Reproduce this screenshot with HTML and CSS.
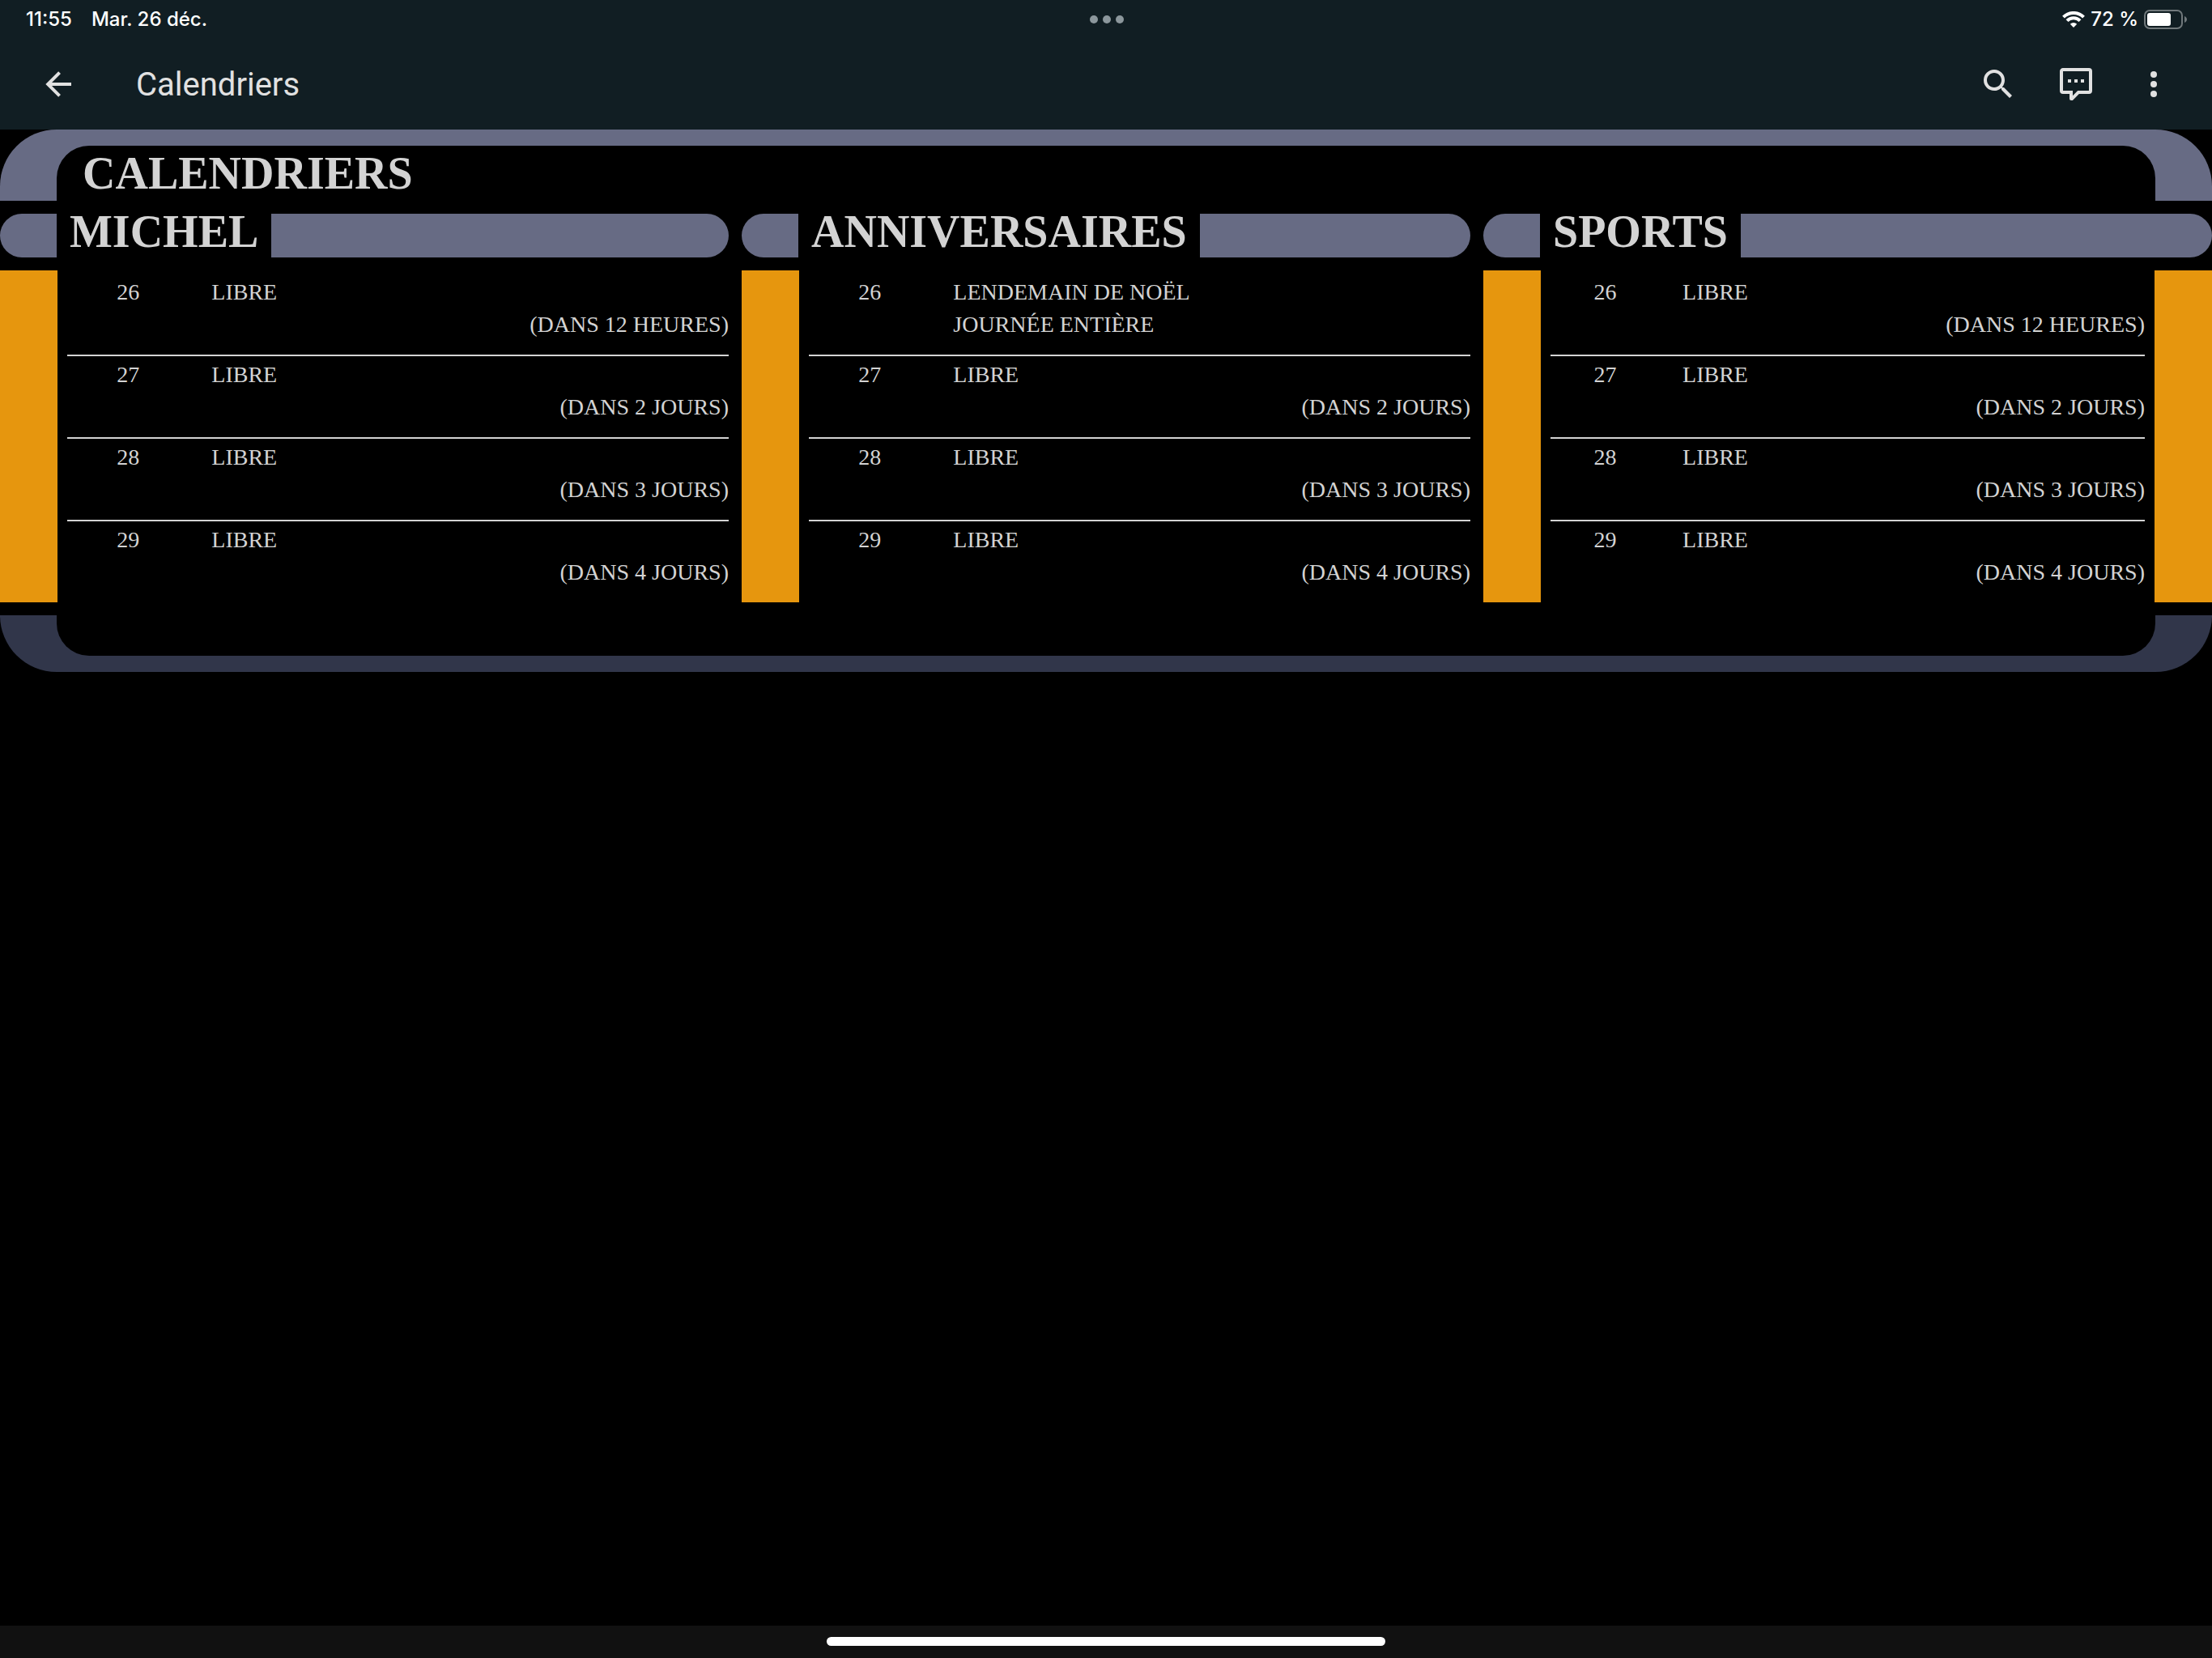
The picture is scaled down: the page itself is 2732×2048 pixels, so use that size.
FILE: index.html
```html
<!DOCTYPE html>
<html lang="fr">
<head>
<meta charset="utf-8">
<meta name="viewport" content="width=device-width, initial-scale=1">
<title>Calendriers</title>
<link rel="stylesheet" href="styles.css">
</head>
<body>
<header class="app-header">
  <div class="status">
    <div class="status-side">
      <span>11:55</span>
      <span>Mar. 26 déc.</span>
    </div>
    <div class="multitask"><i class="dot"></i><i class="dot"></i><i class="dot"></i></div>
    <div class="status-side status-right">
      <svg class="wifi" viewBox="0 0 28 20" aria-hidden="true">
        <g fill="none" stroke="#fff" stroke-width="4">
          <path d="M1.500 7.200A17.500 17.500 0 0 1 26.500 7.200"/>
          <path d="M6 11.700A11.200 11.200 0 0 1 22 11.700"/>
        </g>
        <path fill="#fff" d="M14 20L9.800 15.700A6.200 6.200 0 0 1 18.200 15.700Z"/>
      </svg>
      <span>72 %</span>
      <svg class="battery" viewBox="0 0 54 24" aria-hidden="true">
        <rect x="1" y="1" width="46" height="22" rx="6" fill="none" stroke="#70787b" stroke-width="2"/>
        <rect x="4" y="4" width="29" height="16" rx="3" fill="#fff"/>
        <path d="M50 8C54 9.500 54 14.500 50 16Z" fill="#70787b"/>
      </svg>
    </div>
  </div>
  <div class="toolbar">
    <button class="icon-button" aria-label="Retour">
      <svg viewBox="0 0 24 24"><path d="M20,11V13H8L13.5,18.5L12.08,19.92L4.16,12L12.08,4.08L13.5,5.5L8,11H20Z"/></svg>
    </button>
    <div class="toolbar-title">Calendriers</div>
    <button class="icon-button" aria-label="Rechercher">
      <svg viewBox="0 0 24 24"><path d="M9.5,3A6.5,6.5 0 0,1 16,9.5C16,11.11 15.41,12.59 14.44,13.73L14.71,14H15.5L20.5,19L19,20.5L14,15.5V14.71L13.73,14.44C12.59,15.41 11.11,16 9.5,16A6.5,6.5 0 0,1 3,9.5A6.5,6.5 0 0,1 9.5,3M9.5,5C7,5 5,7 5,9.5C5,12 7,14 9.5,14C12,14 14,12 14,9.5C14,7 12,5 9.5,5Z"/></svg>
    </button>
    <button class="icon-button" aria-label="Assistant">
      <svg viewBox="0 0 24 24"><path fill-rule="evenodd" d="M9,22A1,1 0 0,1 8,21V18H4A2,2 0 0,1 2,16V4C2,2.89 2.9,2 4,2H20A2,2 0 0,1 22,4V16A2,2 0 0,1 20,18H13.9L10.2,21.71C10,21.9 9.75,22 9.5,22H9M10,16V19.08L13.08,16H20V4H4V16H10M17,11H15V9H17V11M13,11H11V9H13V11M9,11H7V9H9V11Z"/></svg>
    </button>
    <button class="icon-button" aria-label="Menu">
      <svg viewBox="0 0 24 24"><circle cx="12" cy="6" r="2"/><circle cx="12" cy="12" r="2"/><circle cx="12" cy="18" r="2"/></svg>
    </button>
  </div>
</header>

<main class="board">
  <div class="frame frame-top"><h1 class="frame-inner">CALENDRIERS</h1></div>

  <div class="calendars">
    <section class="calendar">
      <div class="heading"><h2>MICHEL</h2></div>
      <div class="body">
        <ul class="events">
          <li><span class="day">26</span><span class="event">LIBRE</span><span class="when">(DANS 12 HEURES)</span></li>
          <li><span class="day">27</span><span class="event">LIBRE</span><span class="when">(DANS 2 JOURS)</span></li>
          <li><span class="day">28</span><span class="event">LIBRE</span><span class="when">(DANS 3 JOURS)</span></li>
          <li><span class="day">29</span><span class="event">LIBRE</span><span class="when">(DANS 4 JOURS)</span></li>
        </ul>
      </div>
    </section>

    <section class="calendar">
      <div class="heading"><h2>ANNIVERSAIRES</h2></div>
      <div class="body">
        <ul class="events">
          <li><span class="day">26</span><span class="event">LENDEMAIN DE NOËL</span><span class="event">JOURNÉE ENTIÈRE</span></li>
          <li><span class="day">27</span><span class="event">LIBRE</span><span class="when">(DANS 2 JOURS)</span></li>
          <li><span class="day">28</span><span class="event">LIBRE</span><span class="when">(DANS 3 JOURS)</span></li>
          <li><span class="day">29</span><span class="event">LIBRE</span><span class="when">(DANS 4 JOURS)</span></li>
        </ul>
      </div>
    </section>

    <section class="calendar">
      <div class="heading"><h2>SPORTS</h2></div>
      <div class="body body-closed">
        <ul class="events">
          <li><span class="day">26</span><span class="event">LIBRE</span><span class="when">(DANS 12 HEURES)</span></li>
          <li><span class="day">27</span><span class="event">LIBRE</span><span class="when">(DANS 2 JOURS)</span></li>
          <li><span class="day">28</span><span class="event">LIBRE</span><span class="when">(DANS 3 JOURS)</span></li>
          <li><span class="day">29</span><span class="event">LIBRE</span><span class="when">(DANS 4 JOURS)</span></li>
        </ul>
      </div>
    </section>
  </div>

  <div class="frame frame-bottom"><div class="frame-inner"></div></div>
</main>

<footer class="home-area"><div class="home-bar"></div></footer>
</body>
</html>
```
FILE: styles.css
```css
:root {
  --slate: #676b84;
  --navy: #31364a;
  --orange: #e6960e;
  --text: #d3d3d3;
  --icon: #e1e1e1;
}

* { box-sizing: border-box; }

body {
  margin: 0;
  min-height: 100vh;
  display: flex;
  flex-direction: column;
  background: #000;
  color: var(--text);
  font-family: "Liberation Serif", "Times New Roman", serif;
  font-size: 28px;
  line-height: 40px;
}

h1, h2, ul { margin: 0; padding: 0; }

h1, h2 { font-size: 56px; font-weight: 700; }

/* Header */
.app-header { background: #111e23; }

.status {
  display: grid;
  grid-template-columns: 1fr auto 1fr;
  align-items: center;
  height: 48px;
  padding: 0 30px 0 32px;
  color: #fff;
  font: 500 24px/32px Inter, sans-serif;
}

.status-side { display: flex; align-items: center; gap: 24px; }
.status-right { justify-content: flex-end; gap: 7px; }
.multitask { display: flex; gap: 6px; }
.dot { width: 10px; height: 10px; border-radius: 50%; background: #8c979c; }
.wifi { width: 28px; height: 20px; }
.battery { width: 54px; height: 24px; }

.toolbar {
  display: flex;
  align-items: center;
  height: 112px;
  padding: 0 24px;
}

.toolbar-title {
  flex: 1;
  padding: 2px 0 0 48px;
  color: var(--icon);
  font: 400 40px/48px Roboto, sans-serif;
}

.icon-button {
  width: 96px;
  height: 96px;
  padding: 24px;
  border: 0;
  background: none;
}

.icon-button svg { display: block; width: 48px; height: 48px; fill: var(--icon); }

/* Frame */
.board { flex: 1; }

.frame-top {
  padding: 20px 70px 0;
  border-radius: 70px 70px 0 0;
  background: var(--slate);
}

.frame-top .frame-inner {
  height: 68px;
  padding-left: 32px;
  border-radius: 40px 40px 0 0;
  background: #000;
  line-height: 68px;
}

.frame-bottom {
  padding: 0 70px 20px;
  border-radius: 0 0 70px 70px;
  background: var(--navy);
}

.frame-bottom .frame-inner {
  height: 50px;
  border-radius: 0 0 40px 40px;
  background: #000;
}

/* Calendars */
.calendars {
  display: grid;
  grid-template-columns: repeat(3, 1fr);
  gap: 16px;
  padding: 16px 0;
}

.heading {
  height: 54px;
  margin-bottom: 16px;
  padding-left: 70px;
  display: flex;
  border-radius: 27px;
  background: var(--slate);
}

.heading h2 { padding: 0 16px; background: #000; line-height: 44px; }

.body { padding-left: 12px; border-left: 71px solid var(--orange); }
.body-closed { padding-right: 12px; border-right: 71px solid var(--orange); }

.events { padding-top: 4px; list-style: none; }

.events li {
  display: grid;
  grid-template-columns: 18.4% 1fr;
  column-gap: 28px;
  padding: 3px 0 17px;
  border-bottom: 2px solid var(--text);
}

.events li:last-child { border-bottom: 0; }

.day { text-align: center; }
.event, .when { grid-column: 2; }
.when { text-align: right; }

/* Home indicator */
.home-area {
  display: flex;
  justify-content: center;
  padding: 14px 0 15px;
  background: #111;
}

.home-bar { width: 690px; max-width: 60%; height: 11px; border-radius: 6px; background: #fff; }
```
